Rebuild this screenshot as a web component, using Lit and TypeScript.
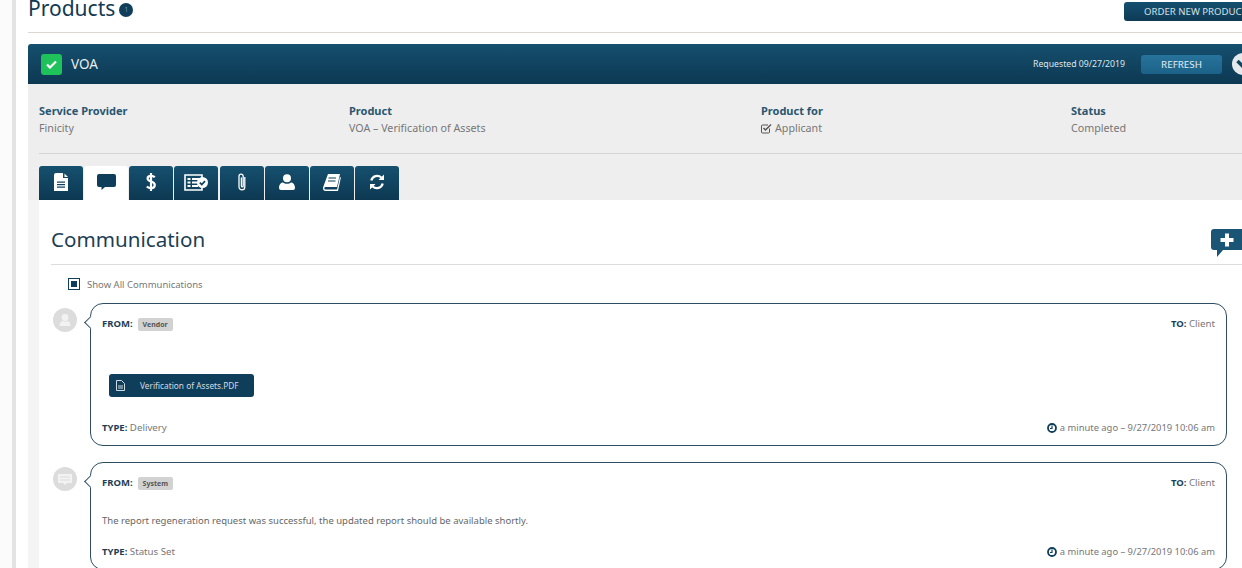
import { LitElement, html, css, svg } from "lit";
import { customElement } from "lit/decorators.js";

const doc = svg`<path d="M3 0h7v5h5v13H1V2a2 2 0 0 1 2-2zM11.500 0.500 15 4h-3.500zM4 8.500v1.300h8V8.500zM4 11v1.300h8V11zM4 13.500v1.300h8v-1.300z" fill-rule="evenodd" fill="#fff"/>`;

const tabs = [
  svg`<svg width="16" height="18" viewBox="0 0 16 18">${doc}</svg>`,
  svg`<svg width="19" height="16" viewBox="0 0 19 16"><path d="M2 0h15a2 2 0 0 1 2 2v9a2 2 0 0 1-2 2H8l-3.500 3v-3H2a2 2 0 0 1-2-2V2a2 2 0 0 1 2-2z" fill="#0f3e5a"/></svg>`,
  svg`<svg width="12" height="20" viewBox="0 0 12 20"><path d="M9.800 5.200C8.900 4.200 7.600 3.800 6 3.800c-2 0-3.400 1-3.400 2.600 0 3.800 7.200 1.900 7.200 6.700 0 1.900-1.600 3.100-3.800 3.100-1.700 0-3.100-.6-4.200-1.700M6 1v18" fill="none" stroke="#fff" stroke-width="2.200"/></svg>`,
  svg`<svg width="24" height="17" viewBox="0 0 24 17"><path d="M1 1h17v15H1z" fill="none" stroke="#fff" stroke-width="1.600"/><path d="M3.500 4h3v2h-3zM3.500 7.500h3v2h-3zM3.500 11h3v2h-3zM8 4h8v2H8zM8 7.500h6v2H8zM8 11h6v2H8z" fill="#fff"/><circle cx="18.500" cy="8.500" r="5.500" fill="#fff"/><path d="M15.800 8.600l2 2 3.200-3.500" fill="none" stroke="#0f3e5a" stroke-width="1.700"/></svg>`,
  svg`<svg width="10" height="20" viewBox="0 0 10 20"><path d="M7.800 5v10a2.900 2.900 0 0 1-5.800 0V4.200a2.100 2.100 0 0 1 4.200 0V14a.9.900 0 0 1-1.800 0V5.500" fill="none" stroke="#fff" stroke-width="1.300"/></svg>`,
  svg`<svg width="16" height="16" viewBox="0 0 16 16"><circle cx="8" cy="4.200" r="4" fill="#fff"/><path d="M2 16a2 2 0 0 1-2-2c0-3 1.500-5.500 4-5.500 1 .8 2.500 1.300 4 1.300s3-.5 4-1.300c2.500 0 4 2.500 4 5.500a2 2 0 0 1-2 2z" fill="#fff"/></svg>`,
  svg`<svg width="18" height="17" viewBox="0 0 18 17"><path d="M5 0h12l-3 13H2.500a1.200 1.200 0 0 0 0 2.400H14l3-12.500.9.600L15 17H2.500C1 17 0 15.800 0 14.300c0-.5.100-1 .3-1.500z" fill="#fff"/><path d="M5.500 4h7.500M5 7h7.500" stroke="#0f3e5a" stroke-width="1.200"/></svg>`,
  svg`<svg width="16" height="16" viewBox="0 0 16 16"><path d="M2.300 6.500A6 6 0 0 1 12.300 3.500M13.700 9.500A6 6 0 0 1 3.700 12.500" fill="none" stroke="#fff" stroke-width="2.300"/><path d="M15 0.500V6H9.500zM1 15.500V10h5.500z" fill="#fff"/></svg>`,
];

const clock = html`<svg class="clock" width="10" height="10" viewBox="0 0 10 10"><circle cx="5" cy="5" r="4" fill="none" stroke="#0f3e5a" stroke-width="1.800"/><path d="M5 2.500V5.500H3" fill="none" stroke="#0f3e5a" stroke-width="1.200"/></svg>`;

const personAvatar = svg`<svg width="24" height="24" viewBox="0 0 24 24"><circle cx="12" cy="12" r="12" fill="#dcdcdc"/><circle cx="12" cy="9.500" r="3.400" fill="#f2f2f2"/><path d="M6.500 18c0-3.500 2-5 3-5 1.500 1 3.500 1 5 0 1 0 3 1.500 3 5z" fill="#f2f2f2"/></svg>`;
const systemAvatar = svg`<svg width="24" height="24" viewBox="0 0 24 24"><circle cx="12" cy="12" r="12" fill="#dcdcdc"/><path d="M5 7h14v9h-5l-2 2-2-2H5z" fill="#f2f2f2"/><path d="M7 10h10M7 13h10" stroke="#dcdcdc" stroke-width="1"/></svg>`;

@customElement("app-root")
export class AppRoot extends LitElement {
  static styles = css`
    :host {
      display: flex;
      width: 1242px;
      height: 568px;
      overflow: hidden;
      background: #fff;
      font-family: "Noto Sans", "Open Sans", sans-serif;
      font-size: 9.700px;
      color: #777;
    }
    .rail {
      flex: 0 0 12px;
      background: #fbfbfb;
      border-right: 4px solid #e3e3e3;
    }
    .main {
      flex: 0 0 1214px;
      padding-left: 12px;
      box-sizing: border-box;
    }
    .top {
      height: 33px;
      width: 1214px;
      box-sizing: border-box;
      display: flex;
      justify-content: space-between;
      align-items: flex-start;
      border-bottom: 1px solid #ddd8cf;
      margin-bottom: 11px;
    }
    h1 {
      margin: 0;
      font-size: 21px;
      font-weight: 400;
      line-height: 17px;
      color: #113a52;
      display: flex;
      align-items: flex-start;
      gap: 4px;
    }
    .count {
      width: 14px;
      height: 14px;
      margin-top: 3px;
      border-radius: 50%;
      background: #0f3e5a;
      color: #6f93a8;
      font-size: 7px;
      line-height: 14px;
      text-align: center;
    }
    .order {
      width: 130px;
      height: 19px;
      margin-top: 2px;
      margin-right: -12px;
      flex: none;
      border-radius: 3px;
      background: linear-gradient(#14506f, #0e3a55);
      color: #d5e0e6;
      font-size: 9.600px;
      line-height: 19px;
      padding-left: 20px;
      box-sizing: border-box;
      white-space: nowrap;
      overflow: hidden;
    }
    .panel {
      width: 1226px;
    }
    .bar {
      height: 40px;
      box-sizing: border-box;
      border-radius: 3px 3px 0 0;
      background: linear-gradient(#15506f, #0d3852);
      display: flex;
      align-items: center;
      padding: 0 0 0 13px;
      color: #fff;
    }
    .ok {
      width: 21px;
      height: 21px;
      border-radius: 3px;
      background: #1fc25a;
      display: flex;
      align-items: center;
      justify-content: center;
      margin-right: 9px;
    }
    .voa {
      font-size: 13.500px;
      flex: 1;
      color: #e8eef2;
    }
    .req {
      font-size: 8.700px;
      color: #dfe7ec;
      margin-right: 16px;
    }
    .refresh {
      width: 81px;
      height: 19px;
      border-radius: 3px;
      background: linear-gradient(#27739c, #1c6288);
      color: #e2edf3;
      font-size: 9.800px;
      line-height: 19px;
      text-align: center;
      margin-right: 10px;
    }
    .chev {
      width: 22px;
      height: 22px;
      flex: none;
    }
    .band {
      background: #eeeeee;
      padding: 19px 0 0 11px;
      height: 116px;
      box-sizing: border-box;
    }
    .info {
      display: grid;
      grid-template-columns: 310px 412px 310px 1fr;
      height: 50px;
      border-bottom: 1px solid #d4d4d4;
    }
    .info b {
      display: block;
      font-size: 11px;
      line-height: 16px;
      color: #2a5670;
      font-weight: 700;
    }
    .info span {
      display: flex;
      align-items: center;
      gap: 3px;
      font-size: 10.700px;
      line-height: 19px;
      color: #777;
    }
    .tabs {
      display: flex;
      margin-top: 12px;
    }
    .tab {
      width: 44px;
      height: 34px;
      margin-right: 1.140px;
      border-radius: 3px 3px 0 0;
      background: linear-gradient(#15506f, #0d3852);
      display: flex;
      align-items: center;
      justify-content: center;
      padding-bottom: 2px;
      box-sizing: border-box;
    }
    .tab.on {
      background: #fff;
    }
    .lower {
      background: #f4f4f4;
      padding-left: 11px;
    }
    .content {
      background: #fff;
      padding: 0 0 1px 12px;
    }
    .head {
      height: 65px;
      box-sizing: border-box;
      border-bottom: 1px solid #dcdcdc;
      display: flex;
      justify-content: space-between;
      align-items: flex-start;
    }
    h2 {
      margin: 25px 0 0;
      font-size: 20.600px;
      line-height: 29px;
      font-weight: 400;
      color: #1d3f55;
    }
    .add {
      margin-top: 29px;
      margin-right: 12px;
      flex: none;
    }
    .show {
      display: flex;
      align-items: center;
      gap: 7px;
      margin: 12px 0 12px 17px;
      height: 14px;
      font-size: 9.500px;
      color: #777;
    }
    .box {
      width: 12px;
      height: 12px;
      box-sizing: border-box;
      border: 1px solid #0f3e5a;
      display: flex;
      align-items: center;
      justify-content: center;
    }
    .box i {
      width: 6px;
      height: 6px;
      background: #0f3e5a;
      display: block;
    }
    .msg {
      display: flex;
      align-items: flex-start;
      gap: 13px;
      margin: 0 0 16px 2px;
    }
    .avatar {
      flex: none;
      margin-top: 5px;
      height: 24px;
    }
    .bubble {
      position: relative;
      width: 1137px;
      box-sizing: border-box;
      border: 1px solid #2c4d63;
      border-radius: 13px;
      padding: 13px 11px 10px;
      display: flex;
      flex-direction: column;
    }
    .bubble::before {
      content: "";
      position: absolute;
      left: -5px;
      top: 14px;
      width: 8px;
      height: 8px;
      background: #fff;
      border-left: 1px solid #2c4d63;
      border-bottom: 1px solid #2c4d63;
      transform: rotate(45deg);
    }
    .row {
      display: flex;
      justify-content: space-between;
      align-items: center;
      line-height: 14px;
      flex: none;
    }
    .row b {
      color: #1d3f55;
      font-weight: 700;
      font-size: 9.500px;
    }
    .from {
      display: flex;
      align-items: center;
      gap: 5px;
    }
    .tag {
      background: #d2d2d2;
      color: #555;
      font-size: 7px;
      font-weight: 700;
      line-height: 13px;
      border-radius: 2px;
      padding: 0 5px;
    }
    .when {
      display: flex;
      align-items: center;
      gap: 3px;
      font-size: 9.400px;
    }
    .pdf {
      flex: none;
      width: 145px;
      height: 23px;
      box-sizing: border-box;
      border-radius: 3px;
      background: #0f3e5a;
      color: #cfdce4;
      font-size: 8.300px;
      display: flex;
      align-items: center;
      gap: 15px;
      padding-left: 7px;
      margin: 43px 0 24px 7px;
    }
    .text {
      flex: none;
      margin: 24px 0 17px;
      line-height: 14px;
      font-size: 9.500px;
      color: #666;
    }
  `;

  render() {
    return html`
      <div class="rail"></div>
      <div class="main">
        <div class="top">
          <h1>Products <span class="count">1</span></h1>
          <div class="order">ORDER NEW PRODUCT</div>
        </div>
        <div class="panel">
          <div class="bar">
            <div class="ok">
              <svg width="11" height="9" viewBox="0 0 11 9"><path d="M1 4.500l3 3 6-6" fill="none" stroke="#fff" stroke-width="2.200"/></svg>
            </div>
            <div class="voa">VOA</div>
            <div class="req">Requested 09/27/2019</div>
            <div class="refresh">REFRESH</div>
            <svg class="chev" viewBox="0 0 22 22"><circle cx="11" cy="11" r="11" fill="#e6e9eb"/><path d="M5.500 8l5.500 5.500L16.500 8" fill="none" stroke="#14435f" stroke-width="3.500"/></svg>
          </div>
          <div class="band">
            <div class="info">
              <div><b>Service Provider</b><span>Finicity</span></div>
              <div><b>Product</b><span>VOA – Verification of Assets</span></div>
              <div>
                <b>Product for</b>
                <span>
                  <svg width="11" height="11" viewBox="0 0 11 11"><path d="M8.500 5.500V9a1 1 0 0 1-1 1H1.500a1 1 0 0 1-1-1V3a1 1 0 0 1 1-1H7" fill="none" stroke="#555" stroke-width="1"/><path d="M2.500 5l2 2 5.500-5.500" fill="none" stroke="#555" stroke-width="1.500"/></svg>
                  Applicant
                </span>
              </div>
              <div><b>Status</b><span>Completed</span></div>
            </div>
            <div class="tabs">
              ${tabs.map((t, i) => html`<div class="tab ${i === 1 ? "on" : ""}">${t}</div>`)}
            </div>
          </div>
          <div class="lower">
            <div class="content">
              <div class="head">
                <h2>Communication</h2>
                <svg class="add" width="31" height="28" viewBox="0 0 31 28"><path d="M3 0h28v21H12l-6 7v-7H3a3 3 0 0 1-3-3V3a3 3 0 0 1 3-3z" fill="#1b5575"/><path d="M14 4.500h4v4.500h4.500v4H18v4.500h-4V13H9.500V9H14z" fill="#fff"/></svg>
              </div>
              <div class="show"><span class="box"><i></i></span>Show All Communications</div>

              <div class="msg">
                <div class="avatar">${personAvatar}</div>
                <div class="bubble">
                  <div class="row">
                    <div class="from"><b>FROM:</b><span class="tag">Vendor</span></div>
                    <div><b>TO:</b> Client</div>
                  </div>
                  <div class="pdf">
                    <svg width="9" height="11" viewBox="0 0 9 11"><path d="M.5.500h5l3 3v7h-8zM2 6h5M2 8h5" fill="none" stroke="#cfdce4" stroke-width="1"/></svg>
                    Verification of Assets.PDF
                  </div>
                  <div class="row">
                    <div><b>TYPE:</b> Delivery</div>
                    <div class="when">${clock} a minute ago – 9/27/2019 10:06 am</div>
                  </div>
                </div>
              </div>

              <div class="msg">
                <div class="avatar">${systemAvatar}</div>
                <div class="bubble">
                  <div class="row">
                    <div class="from"><b>FROM:</b><span class="tag">System</span></div>
                    <div><b>TO:</b> Client</div>
                  </div>
                  <div class="text">The report regeneration request was successful, the updated report should be available shortly.</div>
                  <div class="row">
                    <div><b>TYPE:</b> Status Set</div>
                    <div class="when">${clock} a minute ago – 9/27/2019 10:06 am</div>
                  </div>
                </div>
              </div>
            </div>
          </div>
        </div>
      </div>
    `;
  }
}
